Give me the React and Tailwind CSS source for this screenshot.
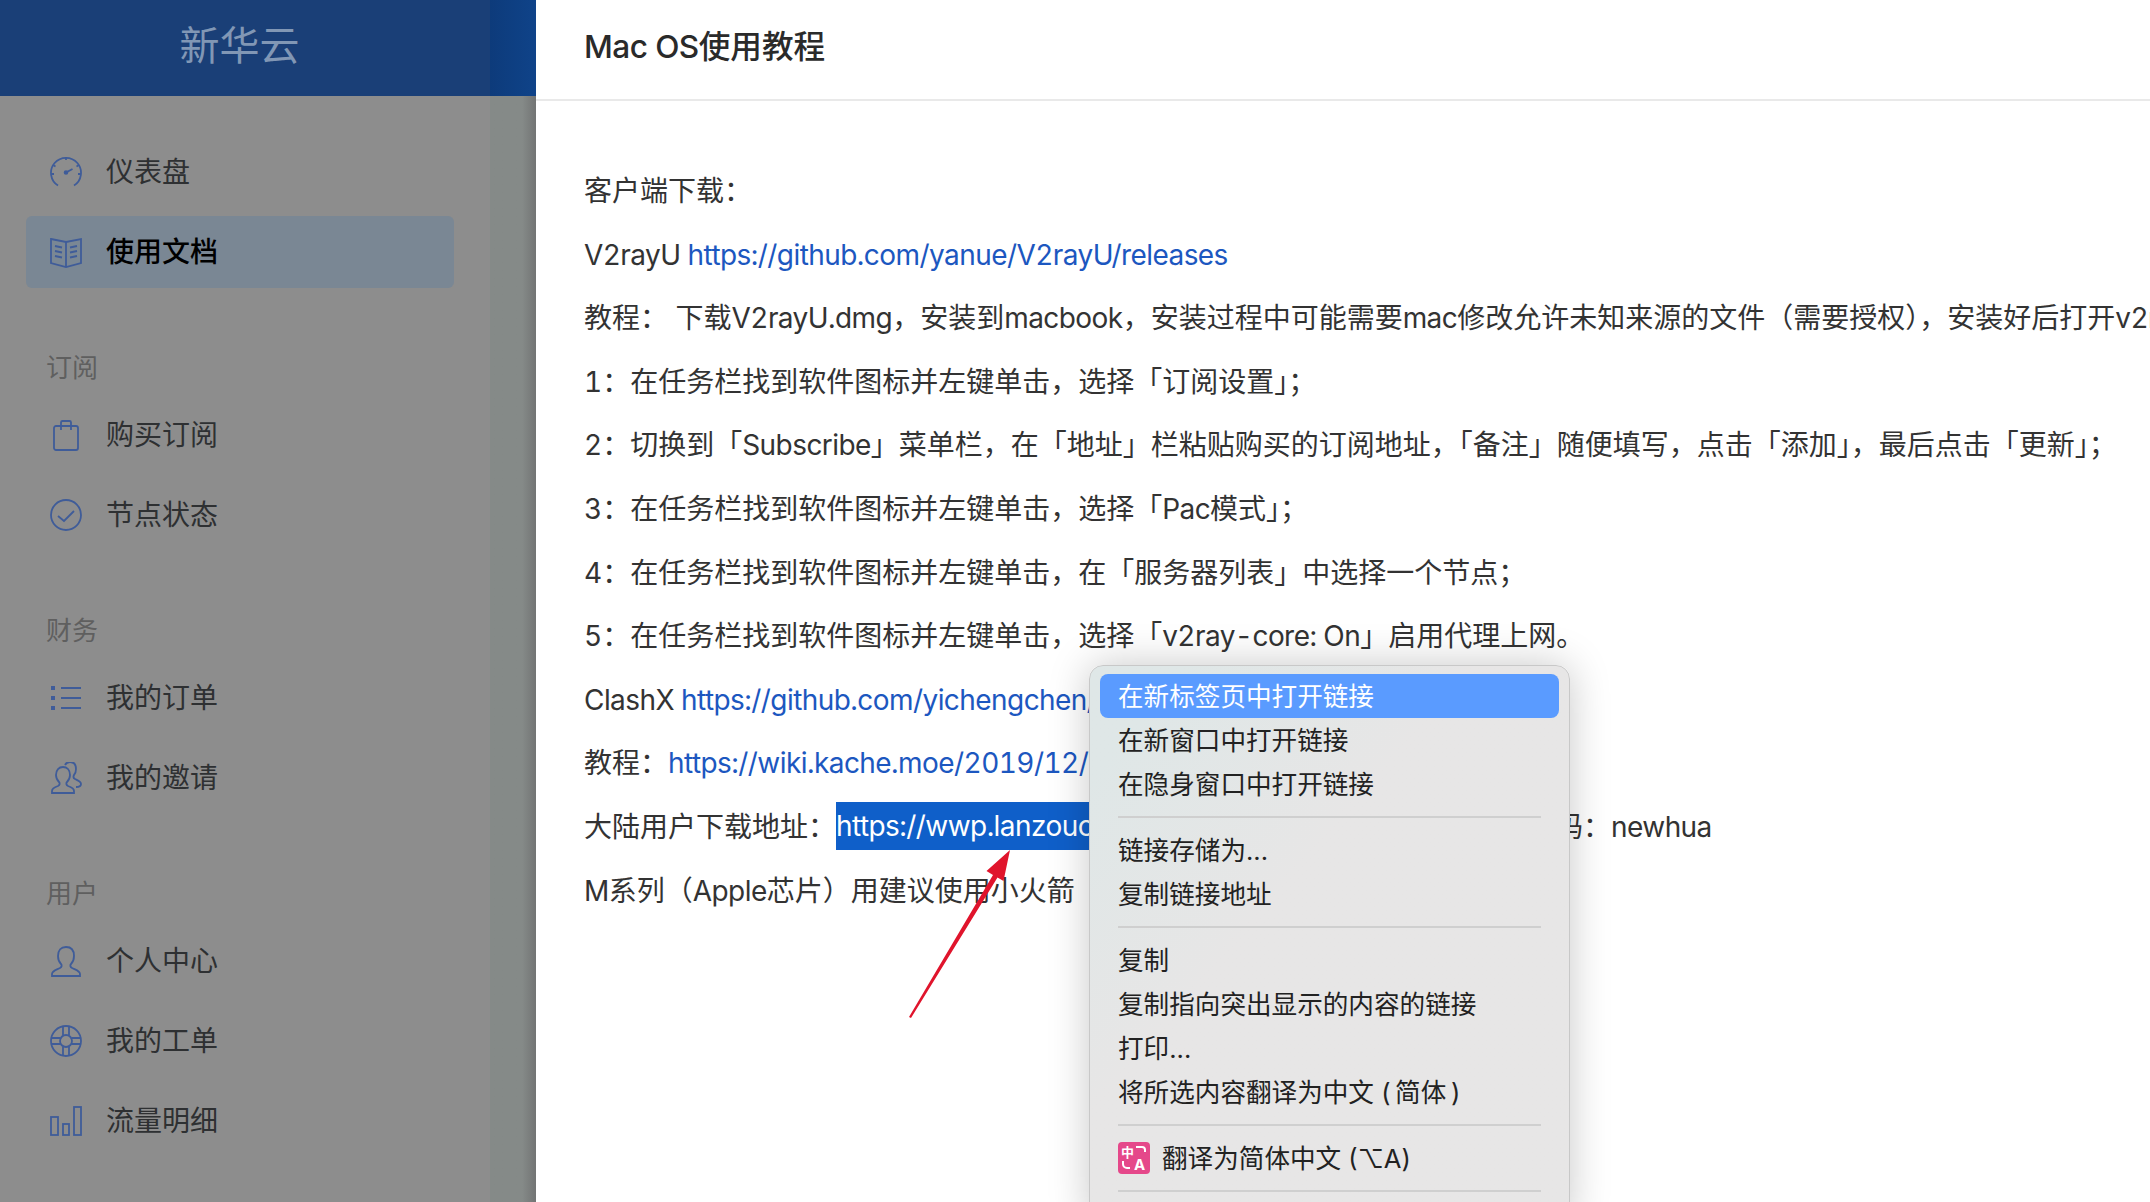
import React from 'react';

const ICON = {
  gauge: (
    <>
      <path d="M8 29.500A15 15 0 1 1 24 29.500" />
      <path d="M16 1v3M3 9l2.500 1.500M29 9l-2.500 1.500M1 18h3M31 18h-3" />
      <circle cx="16" cy="16.500" r="1.400" fill="currentColor" />
      <path d="M16 16.500l6.500-3.500" />
    </>
  ),
  book: (
    <>
      <path d="M1 3l15 3 15-3v24l-15 4-15-4z" />
      <path d="M16 6v25M5 10l7 1.500M5 15l7 1.500M5 20l7 1.500M27 10l-7 1.500M27 15l-7 1.500M27 20l-7 1.500" />
    </>
  ),
  bag: (
    <>
      <rect x="4" y="7" width="24" height="24" rx="2" />
      <path d="M11 11V3.500a1.500 1.500 0 0 1 1.500-1.500h7a1.500 1.500 0 0 1 1.500 1.500V11" />
    </>
  ),
  check: (
    <>
      <circle cx="16" cy="16" r="15" />
      <path d="M8 17l6 5 10-10" />
    </>
  ),
  list: (
    <>
      <path d="M11 6h20M11 16h20M11 26h20" />
      <rect x="1" y="4" width="4" height="4" fill="currentColor" stroke="none" />
      <rect x="1" y="14" width="4" height="4" fill="currentColor" stroke="none" />
      <rect x="1" y="24" width="4" height="4" fill="currentColor" stroke="none" />
    </>
  ),
  users: (
    <>
      <path d="M2 31v-2c0-3 3-4 6-5 2-1 2-3 1-4-2-2-3-4-3-7 0-5 3-8 7-8s7 3 7 8c0 3-1 5-3 7-1 1-1 3 1 4 3 1 6 2 6 5v2z" />
      <path d="M15 3c1-2 3-3 5-3 4 0 6 3 6 7 0 3-1 5-2 6-1 2-1 3 1 4 2 1 6 2 6 5 0 2-2 3-5 3" />
    </>
  ),
  user: (
    <>
      <path d="M2 31v-2c0-3 4-4 8-6 2-1 2-3 1-4-2-2-3-5-3-8 0-6 3-9 8-9s8 3 8 9c0 3-1 6-3 8-1 1-1 3 1 4 4 2 8 3 8 6v2z" />
    </>
  ),
  lifebuoy: (
    <>
      <circle cx="16" cy="16" r="15" />
      <circle cx="16" cy="16" r="6" />
      <path d="M13 1.500v9M19 1.500v9M13 21.500v9M19 21.500v9M1.500 13h9M1.500 19h9M21.500 13h9M21.500 19h9" />
    </>
  ),
  bars: (
    <>
      <rect x="1" y="12" width="7" height="18" />
      <rect x="13" y="19" width="6" height="11" />
      <rect x="24" y="2" width="7" height="28" />
    </>
  ),
};

const NAV = [
  {
    items: [
      { icon: 'gauge', label: '仪表盘' },
      { icon: 'book', label: '使用文档', active: true },
    ],
  },
  {
    title: '订阅',
    items: [
      { icon: 'bag', label: '购买订阅' },
      { icon: 'check', label: '节点状态' },
    ],
  },
  {
    title: '财务',
    items: [
      { icon: 'list', label: '我的订单' },
      { icon: 'users', label: '我的邀请' },
    ],
  },
  {
    title: '用户',
    items: [
      { icon: 'user', label: '个人中心' },
      { icon: 'lifebuoy', label: '我的工单' },
      { icon: 'bars', label: '流量明细' },
    ],
  },
];

const MENU = [
  [{ label: '在新标签页中打开链接', active: true }, { label: '在新窗口中打开链接' }, { label: '在隐身窗口中打开链接' }],
  [{ label: '链接存储为...' }, { label: '复制链接地址' }],
  [{ label: '复制' }, { label: '复制指向突出显示的内容的链接' }, { label: '打印...' }, { label: '将所选内容翻译为中文 (\u2009简体\u2009)' }],
];

// latin runs are a bit narrower in the screenshot than Inter's default
function L({ children }) {
  return <span className="tracking-[-0.56px]">{children}</span>;
}

function NavIcon({ name }) {
  return (
    <svg
      viewBox="0 0 32 32"
      fill="none"
      stroke="currentColor"
      strokeWidth="1.800"
      className="w-8 h-8 shrink-0 text-[#3f5c99]"
    >
      {ICON[name]}
    </svg>
  );
}

function Sidebar() {
  return (
    <aside className="w-[536px] shrink-0 flex">
      <div className="w-[490px] shrink-0 bg-[#8d8d8d]">
        <div className="h-[96px] pr-[11px] pb-[5px] bg-[#1a3f77] flex items-center justify-center text-[40px] text-[#8197b5]">
          新华云
        </div>
        <nav className="pl-[26px] pr-[36px] pt-[40px]">
          {NAV.map((group, i) => (
            <div key={i} className="mb-[47px]">
              {group.title && (
                <div className="h-[64px] pl-[20px] flex items-center text-[26px] text-[#5f5f5f]">
                  {group.title}
                </div>
              )}
              <div className="flex flex-col gap-2">
                {group.items.map((item) => (
                  <div
                    key={item.label}
                    className={`h-[72px] px-[24px] flex items-center gap-[24px] rounded-md text-[28px] ${
                      item.active ? 'bg-[#7a8794] text-black font-medium' : 'text-[#2e3032]'
                    }`}
                  >
                    <NavIcon name={item.icon} />
                    <span>{item.label}</span>
                  </div>
                ))}
              </div>
            </div>
          ))}
        </nav>
      </div>
      <div className="w-[46px] shrink-0 flex flex-col">
        <div className="h-[96px] bg-gradient-to-r from-[#0d3b7b] to-[#0f4389]" />
        <div className="flex-1 bg-gradient-to-r from-[#858a88] from-70% to-[#727474]" />
      </div>
    </aside>
  );
}

function Article() {
  const linkCls = 'text-[#1c57c0] tracking-[-0.56px]';
  return (
    <main className="flex-1 min-w-0 bg-white overflow-hidden text-[#333]">
      <header className="h-[101px] px-[48px] pb-[5px] flex items-center border-b-2 border-[#e9e9e9] text-[31.600px] font-medium text-[#2a2a2a] whitespace-nowrap">
        <span><L>Mac OS</L>使用教程</span>
      </header>
      <div className="pl-[48px] pt-[68px] text-[28px] tabular-nums whitespace-nowrap flex flex-col gap-[19.600px] [&>p]:h-[44px] [&>p]:leading-[44px]">
        <p>客户端下载：</p>
        <p>
          <L>V2rayU </L><a className={linkCls}>https://github.com/yanue/V2rayU/releases</a>
        </p>
        <p>
          教程： 下载<L>V2rayU.dmg</L>，安装到<L>macbook</L>，安装过程中可能需要<L>mac</L>修改允许未知来源的文件（需要授权），安装好后打开<L>v2rayU</L>
        </p>
        <p>1：在任务栏找到软件图标并左键单击，选择「订阅设置」；</p>
        <p>
          2：切换到「<L>Subscribe</L>」菜单栏，在「地址」栏粘贴购买的订阅地址，「备注」随便填写，点击「添加」，最后点击「更新」；
        </p>
        <p>3：在任务栏找到软件图标并左键单击，选择「<L>Pac</L>模式」；</p>
        <p>4：在任务栏找到软件图标并左键单击，在「服务器列表」中选择一个节点；</p>
        <p>5：在任务栏找到软件图标并左键单击，选择「<L>v2ray-core: On</L>」启用代理上网。</p>
        <p>
          <L>ClashX </L><a className={linkCls}>https://github.com/yichengchen/clashX/releases</a>
        </p>
        <p>
          教程：<a className={linkCls}>https://wiki.kache.moe/2019/12/clashx-tutorial</a>
        </p>
        <p>
          大陆用户下载地址：
          <a className="inline-block w-[691px] h-[48px] leading-[48px] align-top -mt-[3px] overflow-hidden bg-[#0f5fc9] text-white tracking-[-0.56px]">
            https://wwp.lanzouc.com/clashx
          </a>
          密码：<L>newhua</L>
        </p>
        <p><L>M</L>系列（<L>Apple</L>芯片）用建议使用小火箭</p>
      </div>
    </main>
  );
}

function ContextMenu() {
  return (
    <div className="absolute left-[1089px] top-[665px] w-[481px] h-[560px] px-[10px] py-[8px] rounded-[14px] border border-[#c8c8c8] bg-gradient-to-br from-[#dfe7e7] from-10% to-[#e7e6e6] to-40% shadow-[0_0_40px_rgba(0,0,0,0.22)] text-[25.600px] text-[#222] whitespace-nowrap">
      {MENU.map((group, i) => (
        <div key={i}>
          {group.map((item) => (
            <div
              key={item.label}
              className={`h-[44px] pl-[18px] pt-[2px] flex items-center rounded-lg ${
                item.active ? 'bg-[#5a9bff] text-white' : ''
              }`}
            >
              {item.label}
            </div>
          ))}
          <div className="h-[22px] mx-[18px] flex items-center">
            <div className="w-full h-[2px] bg-[#cfcfcf]" />
          </div>
        </div>
      ))}
      <div className="h-[44px] pl-[18px] flex items-center gap-[12px]">
        <svg viewBox="0 0 32 32" className="w-8 h-8 shrink-0">
          <rect width="32" height="32" rx="4" fill="#e5488a" />
          <text x="3" y="15" fontSize="13" fontWeight="700" fill="#fff" fontFamily="Noto Sans CJK SC">中</text>
          <text x="16" y="28" fontSize="15" fontWeight="700" fill="#fff" fontFamily="Inter">A</text>
          <path d="M18 5h6a3 3 0 0 1 3 3v2M5 19v3a4 4 0 0 0 4 4h3" fill="none" stroke="#fff" strokeWidth="2" />
        </svg>
        <span className="pt-[2px]">翻译为简体中文 (⌥A)</span>
      </div>
      <div className="h-[22px] mx-[18px] flex items-center">
        <div className="w-full h-[2px] bg-[#cfcfcf]" />
      </div>
    </div>
  );
}

export default function App() {
  return (
    <div className="relative flex w-[2150px] h-[1202px] overflow-hidden font-['Inter','Noto_Sans_CJK_SC',sans-serif]">
      <Sidebar />
      <Article />
      <svg viewBox="0 0 2150 1202" className="absolute inset-0 w-[2150px] h-[1202px] pointer-events-none">
        <path d="M909 1017L993 875L986.500 871L1010 850L1003.500 881L997.500 877.500L911 1018Z" fill="#e0142c" />
      </svg>
      <ContextMenu />
    </div>
  );
}
